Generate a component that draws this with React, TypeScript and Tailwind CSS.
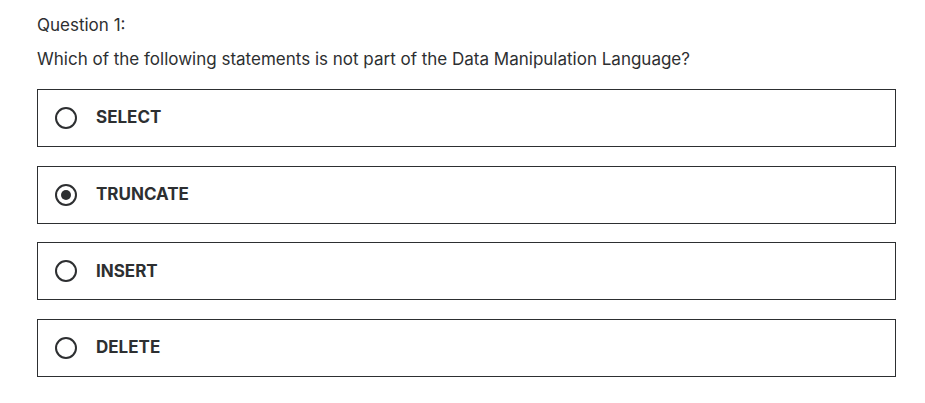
const options = [
  { id: 'select', label: 'SELECT' },
  { id: 'truncate', label: 'TRUNCATE' },
  { id: 'insert', label: 'INSERT' },
  { id: 'delete', label: 'DELETE' },
];

function Radio({ checked }: { checked: boolean }) {
  return (
    <span className="flex h-[22px] w-[22px] shrink-0 items-center justify-center rounded-full border-2 border-[#2d2f31]">
      {checked && <span className="h-[10px] w-[10px] rounded-full bg-[#2d2f31]" />}
    </span>
  );
}

export default function App() {
  const selected = 'truncate';

  return (
    <div className="min-h-screen bg-white px-[37px] pt-[13px] text-[#2d2f31] font-['Inter',sans-serif]">
      <div className="text-[17px] leading-[24px]">Question 1:</div>
      <p className="mt-[10px] text-[17px] leading-[24px]">
        Which of the following statements is not part of the Data Manipulation Language?
      </p>
      <div className="mt-[18px] flex w-[859px] flex-col gap-[18.7px]">
        {options.map((o) => (
          <label
            key={o.id}
            className="flex h-[58px] cursor-pointer items-center border border-[#2d2f31] pl-[17px]"
          >
            <Radio checked={o.id === selected} />
            <span className="ml-[19px] text-[17px] font-bold">{o.label}</span>
          </label>
        ))}
      </div>
    </div>
  );
}
